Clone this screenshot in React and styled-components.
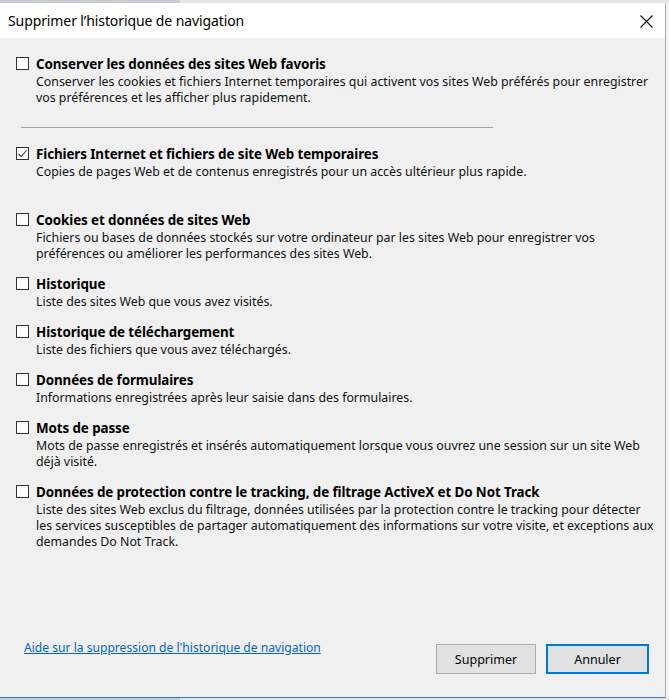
import React from 'react';
import styled, { createGlobalStyle } from 'styled-components';

const Global = createGlobalStyle`
  html, body {
    margin: 0;
    padding: 0;
    background: #f3f3f3;
  }
  body {
    font-family: "Noto Sans", "Open Sans", sans-serif;
    color: #000;
  }
`;

const Screen = styled.div`
  width: 669px;
  height: 700px;
  display: flex;
  flex-direction: column;
  overflow: hidden;
  background: #f4f4f4;
`;

const BackStrip = styled.div`
  height: 3px;
  flex: none;
  background: linear-gradient(to right, #c8cdd4 0 180px, #e6e6e6 180px 1040px, #c8cdd4 1040px);
`;

const Dialog = styled.div`
  width: 665px;
  height: 694px;
  flex: none;
  display: flex;
  flex-direction: column;
  border-right: 1px solid #a9a9a9;
  border-bottom: 1px solid #2b79d0;
  background: #f0f0f0;
`;

const TitleBar = styled.div`
  height: 35px;
  flex: none;
  background: #fff;
  display: flex;
  align-items: center;
  justify-content: space-between;
  padding: 0 12px 0 8px;
`;

const Title = styled.div`
  font-family: "Noto Sans", sans-serif;
  font-size: 14px;
  letter-spacing: -0.1px;
  padding-bottom: 1px;
`;

const Close = styled.svg`
  width: 13px;
  height: 13px;
  margin-top: 1px;
`;

const Body = styled.div`
  flex: 1;
  display: flex;
  flex-direction: column;
  padding: 17px 16px 0 16px;
`;

const Option = styled.div`
  display: flex;
  gap: 7px;
  margin-top: ${(p) => p.$gap ?? 13}px;
`;

const Box = styled.div`
  width: 11px;
  height: 11px;
  flex: none;
  margin-top: 2px;
  border: 1px solid #333;
  background: #fff;
  display: flex;
  align-items: center;
  justify-content: center;
`;

const Texts = styled.div`
  display: flex;
  flex-direction: column;
`;

const Label = styled.div`
  font-size: 13.4px;
  font-weight: 700;
  line-height: 18px;
  letter-spacing: -0.1px;
  white-space: nowrap;
`;

const Desc = styled.div`
  font-size: 12.35px;
  line-height: 16px;
  margin-top: 1px;
  color: #111;
  white-space: nowrap;
`;

const Separator = styled.div`
  height: 1px;
  background: #a0a0a0;
  width: 472px;
  margin: 21px 0 0 5px;
`;

const Footer = styled.div`
  margin-top: auto;
  display: flex;
  align-items: center;
  justify-content: space-between;
  padding: 0 0 23px 8px;
`;

const HelpLink = styled.a`
  font-size: 12.1px;
  color: #0066cc;
  text-decoration: underline;
  margin-top: -23px;
`;

const Buttons = styled.div`
  display: flex;
  gap: 10px;
`;

const Button = styled.button`
  width: ${(p) => p.$w}px;
  height: 30px;
  box-sizing: border-box;
  font-family: "Noto Sans", sans-serif;
  font-size: 12.5px;
  color: #000;
  background: #e1e1e1;
  border: ${(p) => (p.$default ? '2px solid #0078d7' : '1px solid #adadad')};
  padding: 0;
  margin: 0;
`;

const Check = () => (
  <svg width="11" height="11" viewBox="0 0 11 11">
    <path d="M1.5 5.8 L4.2 8.5 L9.6 2.5" fill="none" stroke="#333" strokeWidth="1.1" />
  </svg>
);

const options = [
  {
    label: 'Cookies et données de sites Web',
    desc: [
      'Fichiers ou bases de données stockés sur votre ordinateur par les sites Web pour enregistrer vos',
      'préférences ou améliorer les performances des sites Web.',
    ],
    gap: 31,
  },
  { label: 'Historique', desc: ['Liste des sites Web que vous avez visités.'] },
  { label: 'Historique de téléchargement', desc: ['Liste des fichiers que vous avez téléchargés.'] },
  { label: 'Données de formulaires', desc: ['Informations enregistrées après leur saisie dans des formulaires.'] },
  {
    label: 'Mots de passe',
    desc: [
      'Mots de passe enregistrés et insérés automatiquement lorsque vous ouvrez une session sur un site Web',
      'déjà visité.',
    ],
  },
  {
    label: 'Données de protection contre le tracking, de filtrage ActiveX et Do Not Track',
    desc: [
      'Liste des sites Web exclus du filtrage, données utilisées par la protection contre le tracking pour détecter',
      'les services susceptibles de partager automatiquement des informations sur votre visite, et exceptions aux',
      'demandes Do Not Track.',
    ],
  },
];

function Item({ label, desc, checked, gap }) {
  return (
    <Option $gap={gap}>
      <Box>{checked && <Check />}</Box>
      <Texts>
        <Label>{label}</Label>
        <Desc>
          {desc.map((line, i) => (
            <div key={i}>{line}</div>
          ))}
        </Desc>
      </Texts>
    </Option>
  );
}

export default function App() {
  return (
    <Screen>
      <Global />
      <BackStrip />
      <Dialog>
        <TitleBar>
          <Title>Supprimer l’historique de navigation</Title>
          <Close viewBox="0 0 13 13">
            <path d="M0.5 0.5 L12.5 12.5 M12.5 0.5 L0.5 12.5" stroke="#111" strokeWidth="1.1" />
          </Close>
        </TitleBar>
        <Body>
          <Item
            gap={0}
            label="Conserver les données des sites Web favoris"
            desc={[
              'Conserver les cookies et fichiers Internet temporaires qui activent vos sites Web préférés pour enregistrer',
              'vos préférences et les afficher plus rapidement.',
            ]}
          />
          <Separator />
          <Item
            gap={17}
            checked
            label="Fichiers Internet et fichiers de site Web temporaires"
            desc={['Copies de pages Web et de contenus enregistrés pour un accès ultérieur plus rapide.']}
          />
          {options.map((o) => (
            <Item key={o.label} {...o} />
          ))}
          <Footer>
            <HelpLink href="#">Aide sur la suppression de l'historique de navigation</HelpLink>
            <Buttons>
              <Button $w={100}>Supprimer</Button>
              <Button $w={103} $default>Annuler</Button>
            </Buttons>
          </Footer>
        </Body>
      </Dialog>
      <BackStrip />
    </Screen>
  );
}
